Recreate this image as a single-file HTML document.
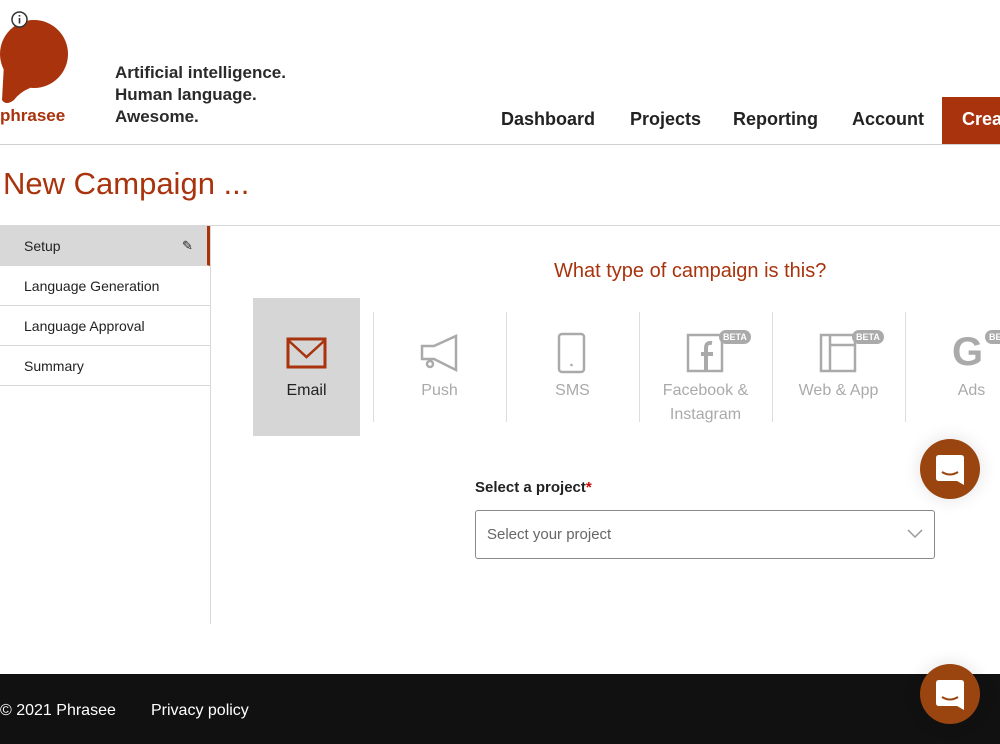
<!DOCTYPE html>
<html><head><meta charset="utf-8"><style>
*{box-sizing:border-box;margin:0;padding:0}
body{width:1000px;height:744px;overflow:hidden;background:#fff;font-family:"Liberation Sans",sans-serif;color:#222;position:relative}
.a{position:absolute}
.nav{font-size:18px;font-weight:bold;color:#222;top:109px}
.side{left:0;width:210px;height:40px;font-size:14px;padding-left:24px;line-height:40px;border-bottom:1px solid #d8d8d8}
.lab{font-size:16px;color:#aaa;text-align:center;width:133px;line-height:24px;top:379px}
.div{width:1px;background:#ddd;top:312px;height:110px}
.beta{background:#aaa;color:#fff;font-size:9px;font-weight:bold;border-radius:7px;padding:1px 4px;line-height:12px}
.chat{width:60px;height:60px;border-radius:50%;background:#9a4510;box-shadow:0 0 18px rgba(0,0,0,.12);left:920px}
</style></head><body>
<svg class="a" style="left:0;top:14px" width="72" height="92" viewBox="0 0 72 92"><circle cx="34" cy="40" r="34" fill="#a8330c"/><path d="M4 50 L2 86 Q6 92 14 86 Q20 78 30 74 Z" fill="#a8330c"/></svg>
<svg class="a" style="left:10px;top:10px" width="19" height="19"><circle cx="9.5" cy="9.5" r="7.5" fill="#fff" stroke="#333" stroke-width="1.5"/><rect x="8.7" y="8" width="1.6" height="5.5" fill="#333"/><rect x="8.7" y="5" width="1.6" height="1.6" fill="#333"/></svg>
<div class="a" style="left:0;top:106px;font-size:17px;font-weight:bold;color:#a8330c">phrasee</div>
<div class="a" style="left:115px;top:62px;font-size:17px;font-weight:bold;line-height:22px;color:#2a2a2a">Artificial intelligence.<br>Human language.<br>Awesome.</div>
<div class="a nav" style="left:501px">Dashboard</div>
<div class="a nav" style="left:630px">Projects</div>
<div class="a nav" style="left:733px">Reporting</div>
<div class="a nav" style="left:852px">Account</div>
<div class="a" style="left:942px;top:97px;width:58px;height:47px;background:#a8330c;color:#fff;font-size:18px;font-weight:bold;padding:12px 0 0 20px;overflow:hidden;white-space:nowrap">Crea</div>
<div class="a" style="left:0;top:144px;width:1000px;height:1px;background:#d0d0d0"></div>
<div class="a" style="left:3px;top:166px;font-size:31px;color:#a8330c">New Campaign ...</div>
<div class="a" style="left:0;top:225px;width:1000px;height:1px;background:#d8d8d8"></div>
<div class="a" style="left:210px;top:226px;width:1px;height:398px;background:#d8d8d8"></div>
<div class="a side" style="top:226px;background:#d8d8d8;border-right:3px solid #a8330c">Setup<span style="position:absolute;left:182px;top:0;font-size:13px">✎</span></div>
<div class="a side" style="top:266px">Language Generation</div>
<div class="a side" style="top:306px">Language Approval</div>
<div class="a side" style="top:346px">Summary</div>
<div class="a" style="left:554px;top:260px;font-size:20px;color:#a8330c">What type of campaign is this?</div>
<div class="a" style="left:253px;top:298px;width:107px;height:138px;background:#d6d6d6"></div>
<svg class="a" style="left:286px;top:337px" width="42" height="32"><rect x="2" y="2" width="37" height="28" fill="none" stroke="#a8330c" stroke-width="3"/><path d="M3 4 L20.5 20 L38 4" fill="none" stroke="#a8330c" stroke-width="2.5"/></svg>
<div class="a div" style="left:373px"></div><div class="a div" style="left:506px"></div><div class="a div" style="left:639px"></div><div class="a div" style="left:772px"></div><div class="a div" style="left:905px"></div>
<svg class="a" style="left:418px;top:333px" width="42" height="40"><path d="M4 13 L16 13 L38 3 L38 37 L16 26 L4 26 Z" fill="none" stroke="#aaa" stroke-width="2.5"/><circle cx="12" cy="31" r="3" fill="none" stroke="#aaa" stroke-width="2.5"/></svg>
<svg class="a" style="left:557px;top:332px" width="30" height="42"><rect x="2" y="2" width="25" height="38" rx="3" fill="none" stroke="#aaa" stroke-width="2.5"/><circle cx="14.5" cy="33" r="1.3" fill="#aaa"/></svg>
<svg class="a" style="left:686px;top:333px" width="40" height="40"><rect x="2" y="2" width="34" height="36" fill="none" stroke="#aaa" stroke-width="2.5"/><path d="M26 10 Q20 9 20 15 L20 38 M15 21 L27 21" fill="none" stroke="#aaa" stroke-width="4"/></svg>
<svg class="a" style="left:819px;top:333px" width="40" height="40"><rect x="2" y="2" width="34" height="36" fill="none" stroke="#aaa" stroke-width="2.5"/><path d="M11 2 L11 38 M11 12 L36 12" stroke="#aaa" stroke-width="2.5"/></svg>
<div class="a" style="left:952px;top:330px;font-size:40px;font-weight:bold;color:#aaa">G</div>
<div class="a beta" style="left:719px;top:330px">BETA</div>
<div class="a beta" style="left:852px;top:330px">BETA</div>
<div class="a beta" style="left:985px;top:330px">BETA</div>
<div class="a lab" style="left:240px;color:#222">Email</div>
<div class="a lab" style="left:373px">Push</div>
<div class="a lab" style="left:506px">SMS</div>
<div class="a lab" style="left:639px">Facebook &amp;<br>Instagram</div>
<div class="a lab" style="left:772px">Web &amp; App</div>
<div class="a lab" style="left:905px">Ads</div>
<div class="a" style="left:475px;top:479px;font-size:15px;font-weight:bold">Select a project<span style="color:#c00">*</span></div>
<div class="a" style="left:475px;top:510px;width:460px;height:49px;border:1px solid #888;border-radius:3px;font-size:15px;color:#666;padding:15px 11px">Select your project</div>
<svg class="a" style="left:907px;top:529px" width="16" height="10"><path d="M1 1 L8 8 L15 1" fill="none" stroke="#999" stroke-width="1.5"/></svg>
<div class="a" style="left:0;top:674px;width:1000px;height:70px;background:#111"></div>
<div class="a" style="left:0;top:702px;font-size:16px;color:#fff">© 2021 Phrasee</div>
<div class="a" style="left:151px;top:702px;font-size:16px;color:#fff">Privacy policy</div>
<div class="a chat" style="top:439px"><svg width="60" height="60"><path d="M16 19 Q16 16 19 16 L41 16 Q44 16 44 19 L44 46 L37 42 L19 42 Q16 42 16 39 Z" fill="#fff"/><path d="M22 33 Q30 38 38 33" fill="none" stroke="#9a4510" stroke-width="2"/></svg></div>
<div class="a chat" style="top:664px"><svg width="60" height="60"><path d="M16 19 Q16 16 19 16 L41 16 Q44 16 44 19 L44 46 L37 42 L19 42 Q16 42 16 39 Z" fill="#fff"/><path d="M22 33 Q30 38 38 33" fill="none" stroke="#9a4510" stroke-width="2"/></svg></div>
</body></html>
